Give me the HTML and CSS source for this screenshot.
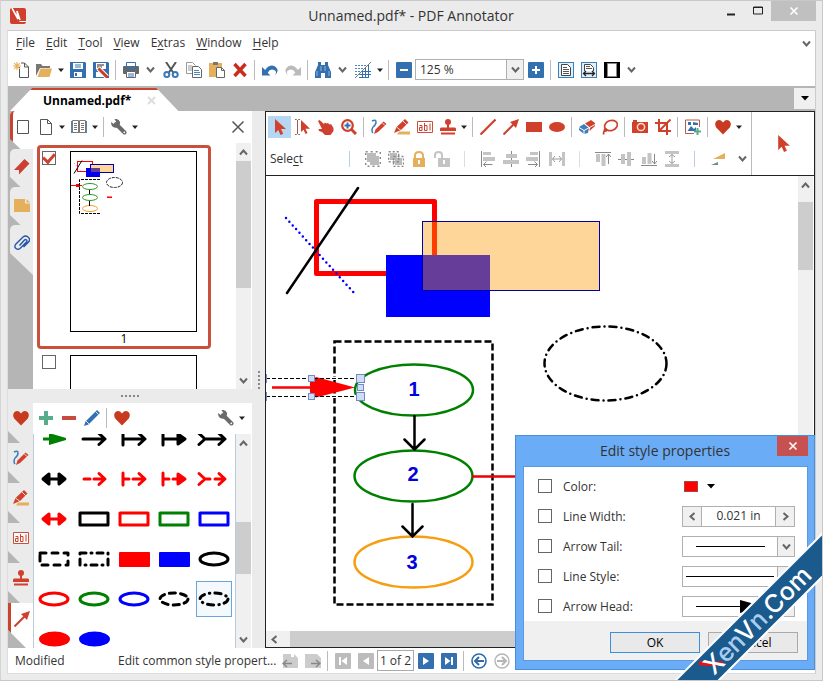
FILE: index.html
```html
<!DOCTYPE html>
<html lang="en">
<head>
<meta charset="utf-8">
<title>Unnamed.pdf* - PDF Annotator</title>
<link rel="stylesheet" href="styles.css">
</head>
<body>
<svg class="defs" aria-hidden="true">
  <symbol id="i-new" viewBox="0 0 16 16"><path d="M6.5 5V15.5h9V5l-4-4H8M11.5 1v4h4" fill="none" stroke="#555"/><path d="M4 0v8M0 4h8M1.2 1.2l5.6 5.6M6.8 1.2L1.200 6.800" stroke="#e9b25d" stroke-width="1.2"/></symbol>
  <symbol id="i-open" viewBox="0 0 16 16"><path d="M0 14V2h5l1.500 2H14v2H4z" fill="#777"/><path d="M4.500 6.500H16L13.500 15H1.500z" fill="#e5b05c"/></symbol>
  <symbol id="i-save" viewBox="0 0 16 16"><path d="M0 0h15l1 1v15H0z" fill="#3470b0"/><path d="M3 1h10v6H3zM4 10h8v5H4z" fill="#fff"/><path d="M5 3h6M5 5h6" stroke="#3470b0"/><path d="M5 11h2v3H5z" fill="#3470b0"/></symbol>
  <symbol id="i-saveas" viewBox="0 0 16 16"><path d="M0 0h15l1 1v15H0z" fill="#3470b0"/><path d="M3 1h10v6H3zM3 10h8v5H3z" fill="#fff"/><path d="M4 3h7M4 5h5" stroke="#222"/><path d="M5 6l9 9" stroke="#fff" stroke-width="5"/><path d="M5.500 6.500l9 9" stroke="#cb3c29" stroke-width="3"/></symbol>
  <symbol id="i-print" viewBox="0 0 16 16"><path d="M3.500 4V.5h9V4" fill="#fff" stroke="#3470b0"/><rect y="4" width="16" height="8" rx="1" fill="#666"/><path d="M2 6h12" stroke="#3470b0" stroke-width="2"/><path d="M3.500 9.500h9v6h-9z" fill="#fff" stroke="#666"/><path d="M5 12h6M5 14h6" stroke="#3470b0"/></symbol>
  <symbol id="i-chev" viewBox="0 0 9 9"><path d="M1 2.500l3.500 4L8 2.500" fill="none" stroke="#666" stroke-width="2"/></symbol>
  <symbol id="i-caret" viewBox="0 0 6 6"><path d="M0 1.500h6L3 5z" fill="#222"/></symbol>
  <symbol id="i-cut" viewBox="0 0 16 16"><path d="M3 0l7.500 11M13 0L5.500 11" stroke="#555" stroke-width="2"/><circle cx="3.800" cy="12.500" r="2.500" fill="none" stroke="#3a78b8" stroke-width="2"/><circle cx="12.200" cy="12.500" r="2.500" fill="none" stroke="#3a78b8" stroke-width="2"/></symbol>
  <symbol id="i-copy" viewBox="0 0 16 16"><path d="M.5.5h6l3 3v8h-9zM2 4h4M2 6h4M2 8h4" fill="#fff" stroke="#999"/><path d="M6.500 4.500h6l3 3v8h-9z" fill="#fff" stroke="#666"/><path d="M8 8.500h5M8 10.500h6M8 12.500h6" stroke="#4a86c0"/></symbol>
  <symbol id="i-paste" viewBox="0 0 16 16"><path d="M0 1h13v14H0z" fill="#e5b05c"/><path d="M4 0h5v3H4z" fill="#777"/><path d="M7.500 5.500h5l3 3v7h-8zM12.500 5.500v3h3" fill="#fff" stroke="#666"/></symbol>
  <symbol id="i-delete" viewBox="0 0 16 16"><path d="M2.500 2l11 12M13.500 2l-11 12" stroke="#cb2c1c" stroke-width="3.400"/></symbol>
  <symbol id="i-undo" viewBox="0 0 16 16"><path d="M0 5v8.500h8.500L5.700 10.700Q8 6.500 12 8t.500 5.500Q17 10.500 15 6.500 12 2 6.500 4.500 4.500 5.500 3.200 8z" fill="#3470b0"/></symbol>
  <symbol id="i-redo" viewBox="0 0 16 16"><path d="M16 5v8.500H7.500l2.800-2.800Q8 6.500 4 8t-.5 5.500Q-1 10.500 1 6.500 4 2 9.500 4.500q2 1 3.300 3.500z" fill="#bbb"/></symbol>
  <symbol id="i-find" viewBox="0 0 16 16"><path d="M3 0h3v3h4V0h3v3l3 7v6h-6v-5H6v5H0v-6l3-7z" fill="#3470b0"/><path d="M2 9v5M6 4v5M10 4v5M14 9v5" stroke="#8fb6dc"/></symbol>
  <symbol id="i-grid" viewBox="0 0 16 16"><path d="M0 3.500h14M0 6.500h11M0 9.500h9M0 12.500h6" stroke="#4a86c0" stroke-dasharray="2 1"/><path d="M16 0L0 16" stroke="#777"/><path d="M7.500 9v7M10.500 6v10M13.500 3v13M5 12.500h11M8 9.500h8M4 15.500h9" stroke="#3470b0"/></symbol>
  <symbol id="i-minus" viewBox="0 0 16 16"><rect width="16" height="16" rx="1" fill="#3470b0"/><path d="M4 8h8" stroke="#fff" stroke-width="2"/></symbol>
  <symbol id="i-plus" viewBox="0 0 16 16"><rect width="16" height="16" rx="1" fill="#3470b0"/><path d="M4 8h8M8 4v8" stroke="#fff" stroke-width="2"/></symbol>
  <symbol id="i-page" viewBox="0 0 16 16"><rect x=".5" y=".5" width="15" height="15" fill="#dff0fb" stroke="#3e7fb8"/><path d="M3.500 2.500h6l3 3v8h-9z" fill="#fff" stroke="#444"/><path d="M5 5.500h4M5 7.500h6M5 9.500h6M5 11.500h6" stroke="#555"/></symbol>
  <symbol id="i-fitw" viewBox="0 0 16 16"><rect x=".5" y=".5" width="15" height="15" fill="#dff0fb" stroke="#3e7fb8"/><path d="M3.500 9V2.500h6l3 3V9" fill="#fff" stroke="#444"/><path d="M5 4.500h4M5 6.500h6" stroke="#555"/><path d="M3 11.500h10M5 9L2.500 11.500 5 14M11 9l2.500 2.500L11 14" fill="none" stroke="#222" stroke-width="1.300"/></symbol>
  <symbol id="i-full" viewBox="0 0 16 16"><path d="M0 0h16v16H0z"/><path d="M3.500 1.500h9v13h-9z" fill="#fff" stroke="#888"/></symbol>
  <symbol id="i-pointer" viewBox="0 0 16 16"><path d="M3 0v14l3.300-3L8.500 16l2.700-1.200L9 10h5z" fill="#d0402c"/></symbol>
  <symbol id="i-textsel" viewBox="0 0 16 16"><path d="M0 .5h1.500l1 1 1-1H5M2.500 1v14M0 15.500h1.500l1-1 1 1H5" fill="none" stroke="#a55a50"/><path d="M6 1v12l2.500-2.300 2 4.300 2-1-2-4.200H15z" fill="#d0402c"/></symbol>
  <symbol id="i-hand" viewBox="0 0 16 16"><path d="M0 2l1.500-1 4.500 4 1-1.500 1.500 1L10 4l1.500 1.500L13 5l2.500 4v3l-3 4H7l-3-3-3-1-.5-2L4 10z" fill="#d0402c"/></symbol>
  <symbol id="i-zoom" viewBox="0 0 16 16"><circle cx="6.500" cy="6.500" r="5.300" fill="#fff" stroke="#d0402c" stroke-width="2.200"/><path d="M10.500 10.500L15 15" stroke="#d0402c" stroke-width="3"/><path d="M6.500 3.500v6M3.500 6.500h6" stroke="#3470b0" stroke-width="2"/></symbol>
  <symbol id="i-pen" viewBox="0 0 16 16"><path d="M1 2q4-2 4 1T2 8q-2 4 0 6" fill="none" stroke="#3f7cbb" stroke-width="1.500"/><path d="M3 15l1.500-4.500 8-8L15.500 5 7 13z" fill="#d0402c"/><path d="M11 3.500l3 3" stroke="#fff" stroke-width=".8"/></symbol>
  <symbol id="i-marker" viewBox="0 0 16 16"><path d="M5 12.500h11v3H3z" fill="#e5b05c"/><path d="M0 14l2.500-6L11 0l3.500 3.500L7 11z" fill="#d0402c"/><path d="M2.500 8L7 11.500M9 2l3.500 3.500" stroke="#fff" stroke-width=".8"/></symbol>
  <symbol id="i-text" viewBox="0 0 16 16"><path d="M.5 2.500h15v11H.5z" fill="#fff" stroke="#c8503f"/><path d="M2.500 6.500h2.500v5H2.500v-3H5M7.500 4v7.500H10v-5H7.500M13 4.500v7" fill="none" stroke="#d0402c"/></symbol>
  <symbol id="i-stamp" viewBox="0 0 16 16"><circle cx="8" cy="3" r="3" fill="#d0402c"/><path d="M7 5h2v3.500h6l1 1V12H0V9.500l1-1h6zM1 13.500h14v2H1z" fill="#d0402c"/></symbol>
  <symbol id="i-line" viewBox="0 0 16 16"><path d="M.5 15.500l15-15" stroke="#d0402c" stroke-width="2.200"/></symbol>
  <symbol id="i-arrow" viewBox="0 0 16 16"><path d="M.5 15.500l11-11" stroke="#c8442f" stroke-width="2"/><path d="M16 0l-3 9-6-6z" fill="#d0402c"/></symbol>
  <symbol id="i-rect" viewBox="0 0 16 16"><path d="M0 3h16v10H0z" fill="#d0402c"/></symbol>
  <symbol id="i-oval" viewBox="0 0 16 16"><ellipse cx="8" cy="8" rx="8" ry="5" fill="#d0402c"/></symbol>
  <symbol id="i-eraser" viewBox="0 0 16 16"><path d="M0 8l5-3 5 4-1 5-4 1-5-4z" fill="#3f7cbb"/><path d="M6 4.500L12 1l4 3v3l-5.500 5L11 8.500z" fill="#d0402c"/><path d="M0 8.500l5 3 11-6M5 11.500V15" fill="none" stroke="#fff"/></symbol>
  <symbol id="i-lasso" viewBox="0 0 16 16"><ellipse cx="9" cy="6.500" rx="6.500" ry="5" transform="rotate(-20 9 6.500)" fill="none" stroke="#d0402c" stroke-width="1.700"/><path d="M3 11q-1.500 1-1.500 4.500" fill="none" stroke="#d0402c" stroke-width="1.800"/><circle cx="3.500" cy="11" r="1.900" fill="#d0402c"/></symbol>
  <symbol id="i-camera" viewBox="0 0 16 16"><path d="M1 1h4v2h11v11H0V3h1z" fill="#d0402c"/><circle cx="9" cy="8" r="3.600" fill="none" stroke="#fde0d0" stroke-width="1.500"/></symbol>
  <symbol id="i-crop" viewBox="0 0 16 16"><path d="M4 0v12h12M0 4h12v12M15.500.5l-11 11" fill="none" stroke="#d0402c" stroke-width="2"/></symbol>
  <symbol id="i-image" viewBox="0 0 16 16"><path d="M9 14.500H.5V1h14v7" fill="#fff" stroke="#b85a4c"/><path d="M2.500 12L6 7l3 3 2-2v4zM3 3h3v3H3zM8 3l5 1v2H8z" fill="#3470b0"/><path d="M12.500 9v7M9 12.500h7" stroke="#55ad8b" stroke-width="2"/></symbol>
  <symbol id="i-heart" viewBox="0 0 16 16"><path d="M8 15.500L1.200 8.500Q-1 4.500 1.500 2 5-.5 8 3.500q3-4 6.500-1.500 2.500 2.500.3 6.500z" fill="#c83a20"/></symbol>
  <symbol id="i-group" viewBox="0 0 16 16"><path d="M2 2h9v3h3v9H5v-3H2z" fill="#bbb"/><path d="M.7.7h14.600v14.600H.7z" fill="none" stroke="#888" stroke-width="1.400" stroke-dasharray="2 3"/></symbol>
  <symbol id="i-ungroup" viewBox="0 0 16 16"><path d="M2 2h7v7H2zM7 7h7v7H7z" fill="#bbb"/><path d="M.7.7h10v10H.7zM5.500 5.500h10v10h-10z" fill="none" stroke="#888" stroke-width="1.400" stroke-dasharray="2 2"/></symbol>
  <symbol id="i-lock" viewBox="0 0 16 16"><path d="M4 8V4.500q0-3.500 4-3.500t4 3.500V8" fill="none" stroke="#e5b05c" stroke-width="2"/><path d="M2 7h12v9H2z" fill="#e5b05c"/><path d="M8 9v4" stroke="#fff" stroke-width="2"/></symbol>
  <symbol id="i-unlock" viewBox="0 0 16 16"><path d="M1 7V4q0-3 3.500-3T8 4v4" fill="none" stroke="#c4c4c4" stroke-width="2"/><path d="M4 7h12v9H4z" fill="#c4c4c4"/><path d="M10 9v4" stroke="#fff" stroke-width="2"/></symbol>
  <symbol id="i-al" viewBox="0 0 16 16"><path d="M1.500 0v16" stroke="#888"/><path d="M3 1h8v3H3zM3 6h12v4H3z" fill="#c4c4c4"/><path d="M3.500 13.500h9M6.500 10.500l-3 3 3 3" fill="none" stroke="#888"/></symbol>
  <symbol id="i-ac" viewBox="0 0 16 16"><path d="M8.500 0v16" stroke="#888"/><path d="M3 3h11v4H3zM0 9h16v4H0z" fill="#c4c4c4"/></symbol>
  <symbol id="i-ar" viewBox="0 0 16 16"><path d="M13.500 0v16" stroke="#888"/><path d="M4 1h8v3H4zM0 6h12v4H0z" fill="#c4c4c4"/><path d="M2 13.500h9M8.500 10.500l3 3-3 3" fill="none" stroke="#888"/></symbol>
  <symbol id="i-aw" viewBox="0 0 16 16"><path d="M0 1h3v14H0zM13 1h3v14h-3z" fill="#c4c4c4"/><path d="M3.500 8h9M6 5L3.500 8 6 11M10 5l2.500 3L10 11" fill="none" stroke="#999"/></symbol>
  <symbol id="i-at" viewBox="0 0 16 16"><path d="M0 1.500h16M13.500 3v10M11 6l2.500-3L16 6" fill="none" stroke="#888"/><path d="M1 3h4v8H1zM6.500 3h4v12h-4z" fill="#c4c4c4"/></symbol>
  <symbol id="i-am" viewBox="0 0 16 16"><path d="M0 8.500h16" stroke="#888"/><path d="M3 3h4v10H3zM9 1h4v14H9z" fill="#c4c4c4"/></symbol>
  <symbol id="i-ab" viewBox="0 0 16 16"><path d="M0 14.500h16M13.500 3v10M11 10l2.500 3 2.500-3" fill="none" stroke="#888"/><path d="M1 6h4v7H1zM6.500 2h4v11h-4z" fill="#c4c4c4"/></symbol>
  <symbol id="i-ah" viewBox="0 0 16 16"><path d="M1 0h14v3H1zM1 13h14v3H1z" fill="#c4c4c4"/><path d="M8 3.500v9M5 6l3-2.500L11 6M5 10l3 2.500 3-2.500" fill="none" stroke="#999"/></symbol>
  <symbol id="i-flip" viewBox="0 0 16 16"><path d="M3 8L15 2v6z" fill="#e5b05c"/><path d="M1 14l7-3v3z" fill="#6e8a8a"/></symbol>
  <symbol id="i-blank" viewBox="0 0 16 16"><path d="M2.500 1.500h11v13h-11z" fill="#fff" stroke="#555"/></symbol>
  <symbol id="i-doc" viewBox="0 0 16 16"><path d="M2.500.5h7l4 4v11h-11zM9.500.5v4h4" fill="#fff" stroke="#555"/></symbol>
  <symbol id="i-book" viewBox="0 0 16 16"><path d="M0 2h16v12H0z" fill="#4c86ba"/><path d="M1.500 1.500h6v12h-6zM8.500 1.500h6v12h-6z" fill="#fff" stroke="#777"/><path d="M3 4.500h3M3 6.500h3M3 8.500h3M3 10.500h3M10 4.500h3M10 6.500h3M10 8.500h3M10 10.500h3" stroke="#777"/></symbol>
  <symbol id="i-wrench" viewBox="0 0 16 16"><path d="M5 5l8.500 8.500" stroke="#6a6a6a" stroke-width="4" stroke-linecap="round"/><path d="M3.500 0Q8-.5 9 3q.5 4-2.500 5.500Q3 9.500 1 7 0 5.500 0 3l3.500 2.500 2-2z" fill="#6a6a6a"/><circle cx="13.300" cy="13.300" r=".9" fill="#fff"/></symbol>
  <symbol id="i-close" viewBox="0 0 16 16"><path d="M2.500 2.500l11 11M13.500 2.500l-11 11" stroke="#555" stroke-width="1.500"/></symbol>
  <symbol id="i-mark" viewBox="0 0 16 16"><path d="M0 11L10.500 0 15.500 4.500 5 15.500 5 11z" fill="#cb4030"/></symbol>
  <symbol id="i-note" viewBox="0 0 16 16"><path d="M0 2h11v4.500h5V15H0zM12.500 2L16 5.500h-3.500z" fill="#e5b05c"/></symbol>
  <symbol id="i-clip" viewBox="0 0 16 16"><path d="M5.500 10.500l5-5.500q1-1 2 0t0 2L6 13.500q-2 1.500-4 0t-.5-4L9 2q2.500-2 5 0t1 4.500L9.500 12" fill="none" stroke="#2657a8" stroke-width="1.400"/></symbol>
  <symbol id="i-add" viewBox="0 0 16 16"><path d="M8 1v14M1 8h14" stroke="#55ad8b" stroke-width="4"/></symbol>
  <symbol id="i-remove" viewBox="0 0 16 16"><path d="M1 8h14" stroke="#c84c3e" stroke-width="4"/></symbol>
  <symbol id="i-pencil" viewBox="0 0 16 16"><path d="M0 16l1.500-4.500L13 0l3 3L4.500 14.500z" fill="#3470b0"/><path d="M2 11l3 3M11.500 1.500l3 3" stroke="#fff" stroke-width=".8"/></symbol>
  <symbol id="i-prevdoc" viewBox="0 0 16 16"><path d="M1 1h8v3h3V1l4 4v10H1z" fill="#ccc"/><path d="M1 10.500h9M5 7l-4 3.500L5 14" fill="none" stroke="#888" stroke-width="1.500"/></symbol>
  <symbol id="i-nextdoc" viewBox="0 0 16 16"><path d="M0 1h12l4 4v10H0z" fill="#ccc"/><path d="M6 10.500h9M11 7l4 3.500-4 3.500" fill="none" stroke="#888" stroke-width="1.500"/></symbol>
  <symbol id="i-first" viewBox="0 0 16 16"><rect width="16" height="16" rx="1" fill="#bcbcbc"/><path d="M4 4h2v8H4zM12 4v8L6.500 8z" fill="#fff"/></symbol>
  <symbol id="i-prev" viewBox="0 0 16 16"><rect width="16" height="16" rx="1" fill="#bcbcbc"/><path d="M11 4v8L5 8z" fill="#fff"/></symbol>
  <symbol id="i-next" viewBox="0 0 16 16"><rect width="16" height="16" rx="1" fill="#3470b0"/><path d="M5 4v8l6-4z" fill="#fff"/></symbol>
  <symbol id="i-last" viewBox="0 0 16 16"><rect width="16" height="16" rx="1" fill="#3470b0"/><path d="M4 4v8l5.500-4zM10 4h2v8h-2z" fill="#fff"/></symbol>
  <symbol id="i-back" viewBox="0 0 16 16"><circle cx="8" cy="8" r="7" fill="#fff" stroke="#2f6cab" stroke-width="1.600"/><path d="M4 8h9M8 4L4 8l4 4" fill="none" stroke="#2f6cab" stroke-width="2"/></symbol>
  <symbol id="i-fwd" viewBox="0 0 16 16"><circle cx="8" cy="8" r="7" fill="#fff" stroke="#b5b5b5" stroke-width="1.400"/><path d="M3 8h9M8 4l4 4-4 4" fill="none" stroke="#b5b5b5" stroke-width="2"/></symbol>
</svg>

<div class="window">
  <header class="titlebar">
    <svg class="logo" viewBox="0 0 16 16"><rect width="16" height="16" rx="2" fill="#cf3f2b"/><path d="M2 0l6 11-1-8 3 9" fill="none" stroke="#fff" stroke-width="1.600"/><path d="M9.500 13.500H16" stroke="#fff"/></svg>
    <h1>Unnamed.pdf* - PDF Annotator</h1>
    <div class="winbtns">
      <button aria-label="Minimize"><svg width="12" height="12"><path d="M2 9.500h8" stroke="#222" stroke-width="2"/></svg></button>
      <button aria-label="Maximize"><svg width="12" height="12"><path d="M1.500 2v7h9V2zM1 2.500h10" fill="none" stroke="#222"/></svg></button>
      <button class="winclose" aria-label="Close"><svg width="12" height="12"><path d="M2.500 2.500l7 7M9.500 2.500l-7 7" stroke="#fff" stroke-width="1.600"/></svg></button>
    </div>
  </header>

  <div class="client">
    <nav class="menu">
      <a href="#"><u>F</u>ile</a><a href="#"><u>E</u>dit</a><a href="#"><u>T</u>ool</a><a href="#"><u>V</u>iew</a><a href="#">E<u>x</u>tras</a><a href="#"><u>W</u>indow</a><a href="#"><u>H</u>elp</a>
      <button class="chev push" aria-label="More menus"><svg><use href="#i-chev"/></svg></button>
    </nav>

    <div class="bar mainbar">
      <button class="ib" aria-label="New"><svg><use href="#i-new"/></svg></button>
      <button class="ib" aria-label="Open"><svg><use href="#i-open"/></svg></button>
      <button class="caret" aria-label="Recent files"><svg><use href="#i-caret"/></svg></button>
      <button class="ib" aria-label="Save"><svg><use href="#i-save"/></svg></button>
      <button class="ib" aria-label="Save as"><svg><use href="#i-saveas"/></svg></button>
      <i class="sep"></i>
      <button class="ib" aria-label="Print"><svg><use href="#i-print"/></svg></button>
      <button class="chev" aria-label="More file tools"><svg><use href="#i-chev"/></svg></button>
      <button class="ib" aria-label="Cut"><svg><use href="#i-cut"/></svg></button>
      <button class="ib" aria-label="Copy"><svg><use href="#i-copy"/></svg></button>
      <button class="ib" aria-label="Paste"><svg><use href="#i-paste"/></svg></button>
      <button class="ib" aria-label="Delete"><svg><use href="#i-delete"/></svg></button>
      <i class="sep"></i>
      <button class="ib" aria-label="Undo"><svg><use href="#i-undo"/></svg></button>
      <button class="ib" aria-label="Redo"><svg><use href="#i-redo"/></svg></button>
      <i class="sep"></i>
      <button class="ib" aria-label="Find"><svg><use href="#i-find"/></svg></button>
      <button class="chev" aria-label="More edit tools"><svg><use href="#i-chev"/></svg></button>
      <button class="ib" aria-label="Grid"><svg><use href="#i-grid"/></svg></button>
      <button class="caret" aria-label="Grid options"><svg><use href="#i-caret"/></svg></button>
      <i class="sep"></i>
      <button class="ib" aria-label="Zoom out"><svg><use href="#i-minus"/></svg></button>
      <div class="combo zoomcombo"><select aria-label="Zoom"><option>125 %</option></select><span class="drop"><svg><use href="#i-chev"/></svg></span></div>
      <button class="ib" aria-label="Zoom in"><svg><use href="#i-plus"/></svg></button>
      <i class="sep"></i>
      <button class="ib" aria-label="Fit page"><svg><use href="#i-page"/></svg></button>
      <button class="ib" aria-label="Fit width"><svg><use href="#i-fitw"/></svg></button>
      <button class="ib" aria-label="Full screen"><svg><use href="#i-full"/></svg></button>
      <button class="chev" aria-label="More view tools"><svg><use href="#i-chev"/></svg></button>
    </div>

    <div class="doctabs">
      <a class="doctab" href="#"><span>Unnamed.pdf*</span><svg width="9" height="9"><path d="M1 1l7 7M8 1L1 8" stroke="#ddd" stroke-width="2"/></svg></a>
      <button class="tablist" aria-label="Document list"><svg width="8" height="5"><path d="M0 0h8L4 4.500z"/></svg></button>
    </div>

    <div class="work">
      <aside class="left">
        <section class="pages">
          <div class="sidetabs">
            <button class="on" aria-label="Pages"></button>
            <button aria-label="Bookmarks"><svg><use href="#i-mark"/></svg></button>
            <button aria-label="Notes"><svg><use href="#i-note"/></svg></button>
            <button aria-label="Attachments"><svg><use href="#i-clip"/></svg></button>
          </div>
          <div class="panel">
            <div class="bar panelbar pagesbar">
              <button class="ib" aria-label="Page size"><svg><use href="#i-blank"/></svg></button>
              <button class="ib" aria-label="Page"><svg><use href="#i-doc"/></svg></button>
              <button class="caret" aria-label="Page options"><svg><use href="#i-caret"/></svg></button>
              <button class="ib" aria-label="Layout"><svg><use href="#i-book"/></svg></button>
              <button class="caret" aria-label="Layout options"><svg><use href="#i-caret"/></svg></button>
              <i class="sep"></i>
              <button class="ib" aria-label="Settings"><svg><use href="#i-wrench"/></svg></button>
              <button class="caret" aria-label="Settings options"><svg><use href="#i-caret"/></svg></button>
              <button class="ib push" aria-label="Close panel"><svg><use href="#i-close"/></svg></button>
            </div>
            <div class="scrollrow">
              <div class="thumbs">
                <div class="thumb on">
                  <input type="checkbox" checked aria-label="Select page 1">
                  <div class="sheet">
                    <svg width="125" height="179" viewBox="71 152 125 179">
                      <g fill="none"><path d="M71 185.500h11" stroke="red"/><path d="M76 184h4v3h-4zM107 196.500h5v1.500h-5z" fill="red"/><rect x="77.500" y="161.500" width="15" height="10" stroke="red"/><path d="M74 173.500l8-13" stroke="#000"/><path d="M74 163l8 9" stroke="#88f" stroke-dasharray="1 2"/><rect x="90.500" y="164.500" width="23" height="8" fill="#ffd699" stroke="#00a"/><rect x="86" y="168" width="14" height="9" fill="#00e"/><rect x="91" y="168" width="9" height="4" fill="#663c96"/>
                      <path d="M100 179.500H79.500v34H100" stroke="#000" stroke-dasharray="3 1"/><ellipse cx="90" cy="186.500" rx="7.500" ry="3" stroke="#2a9a2a"/><ellipse cx="90" cy="197.500" rx="7.500" ry="3" stroke="#2a9a2a"/><ellipse cx="90" cy="208.500" rx="7.500" ry="3" stroke="#f0a020"/><path d="M89.500 190v4M89.500 201v5" stroke="#000"/><ellipse cx="114.500" cy="182.500" rx="8" ry="5" stroke="#222" stroke-dasharray="3 1"/></g>
                    </svg>
                  </div>
                  <span>1</span>
                </div>
                <div class="thumb">
                  <input type="checkbox" aria-label="Select page 2">
                  <div class="sheet"></div>
                </div>
              </div>
              <div class="vscroll"><button aria-label="Scroll up"><svg class="up"><use href="#i-chev"/></svg></button><i class="bar1"></i><button class="push-y" aria-label="Scroll down"><svg><use href="#i-chev"/></svg></button></div>
            </div>
          </div>
        </section>

        <div class="hsplit"></div>

        <section class="favs">
          <div class="tooltabs">
            <button aria-label="Favorites"><svg><use href="#i-heart"/></svg></button>
            <button aria-label="Pen"><svg><use href="#i-pen"/></svg></button>
            <button aria-label="Marker"><svg><use href="#i-marker"/></svg></button>
            <button aria-label="Text"><svg><use href="#i-text"/></svg></button>
            <button aria-label="Stamp"><svg><use href="#i-stamp"/></svg></button>
            <button class="on" aria-label="Arrow"><svg><use href="#i-arrow"/></svg></button>
          </div>
          <div class="panel">
            <div class="bar panelbar">
              <button class="ib" aria-label="Add"><svg><use href="#i-add"/></svg></button>
              <button class="ib" aria-label="Remove"><svg><use href="#i-remove"/></svg></button>
              <button class="ib" aria-label="Edit"><svg><use href="#i-pencil"/></svg></button>
              <i class="sep"></i>
              <button class="ib" aria-label="Favorite"><svg><use href="#i-heart"/></svg></button>
              <button class="ib push" aria-label="Settings"><svg><use href="#i-wrench"/></svg></button>
              <button class="caret" aria-label="Settings options"><svg><use href="#i-caret"/></svg></button>
            </div>
            <div class="scrollrow">
              <div class="styles">
                <div class="stylegrid">
                  <svg viewBox="0 0 40 40"><path d="M9 20h8" stroke="green" stroke-width="3"/><path d="M15 14v12l17-5v-2z" fill="green"/></svg>
                  <svg viewBox="0 0 40 40"><path d="M9 20h21M25 14.500l6 5.500-6 5.500" class="k"/></svg>
                  <svg viewBox="0 0 40 40"><path d="M9 20h21M9 14v12M25 14.500l6 5.500-6 5.500" class="k"/></svg>
                  <svg viewBox="0 0 40 40"><path d="M9 20h18M9 14v12M24 15v10l7-5z" class="k"/><path d="M24 15v10l7-5z"/></svg>
                  <svg viewBox="0 0 40 40"><path d="M10 20h20M5 14.500l6 5.500-6 5.500M25 14.500l6 5.500-6 5.500" class="k"/></svg>

                  <svg viewBox="0 0 40 40"><path d="M12 20h16M15 15v10l-6-5zM25 15v10l6-5z" class="k"/><path d="M15 15v10l-6-5zM25 15v10l6-5z"/></svg>
                  <svg viewBox="0 0 40 40"><path d="M10 20h6M20 20h10M25 14.500l6 5.500-6 5.500" class="k r"/></svg>
                  <svg viewBox="0 0 40 40"><path d="M9 20h6M19 20h11M9 14v12M25 14.500l6 5.500-6 5.500" class="k r"/></svg>
                  <svg viewBox="0 0 40 40"><path d="M9 20h6M19 20h8M9 14v12" class="k r"/><path d="M24 15v10l7-5z" class="k r solid"/></svg>
                  <svg viewBox="0 0 40 40"><path d="M10 20h6M21 20h9M5 14.500l6 5.500-6 5.500M25 14.500l6 5.500-6 5.500" class="k r"/></svg>

                  <svg viewBox="0 0 40 40"><path d="M12 20h16" class="k r"/><path d="M15 15v10l-6-5zM25 15v10l6-5z" class="k r solid"/></svg>
                  <svg viewBox="0 0 40 40"><rect x="6" y="14" width="28" height="12" class="k"/></svg>
                  <svg viewBox="0 0 40 40"><rect x="6" y="14" width="28" height="12" class="k r"/></svg>
                  <svg viewBox="0 0 40 40"><rect x="6" y="14" width="28" height="12" class="k g"/></svg>
                  <svg viewBox="0 0 40 40"><rect x="6" y="14" width="28" height="12" class="k b"/></svg>

                  <svg viewBox="0 0 40 40"><rect x="6" y="14" width="28" height="12" class="k" stroke-dasharray="6 6"/></svg>
                  <svg viewBox="0 0 40 40"><rect x="6" y="14" width="28" height="12" class="k" stroke-dasharray="6 5 1 5"/></svg>
                  <svg viewBox="0 0 40 40"><rect x="5" y="13" width="31" height="15" rx="1" fill="red"/></svg>
                  <svg viewBox="0 0 40 40"><rect x="5" y="13" width="31" height="15" rx="1" fill="blue"/></svg>
                  <svg viewBox="0 0 40 40"><ellipse cx="20" cy="20" rx="14" ry="6" class="k"/></svg>

                  <svg viewBox="0 0 40 40"><ellipse cx="20" cy="20" rx="14" ry="6" class="k r"/></svg>
                  <svg viewBox="0 0 40 40"><ellipse cx="20" cy="20" rx="14" ry="6" class="k g"/></svg>
                  <svg viewBox="0 0 40 40"><ellipse cx="20" cy="20" rx="14" ry="6" class="k b"/></svg>
                  <svg viewBox="0 0 40 40"><ellipse cx="20" cy="20" rx="14" ry="6" class="k" stroke-dasharray="6 5"/></svg>
                  <svg viewBox="0 0 40 40"><rect x="2.500" y="2.500" width="35" height="35" fill="#f4f9fd" stroke="#6aa5dc"/><ellipse cx="20" cy="20" rx="14" ry="6" class="k" stroke-dasharray="6 5 .5 5"/></svg>

                  <svg viewBox="0 0 40 40"><ellipse cx="20.500" cy="20" rx="15.500" ry="7.500" fill="red"/></svg>
                  <svg viewBox="0 0 40 40"><ellipse cx="20.500" cy="20" rx="15.500" ry="7.500" fill="blue"/></svg>
                </div>
              </div>
              <div class="vscroll"><button aria-label="Scroll up"><svg class="up"><use href="#i-chev"/></svg></button><i class="bar2"></i><button class="push-y" aria-label="Scroll down"><svg><use href="#i-chev"/></svg></button></div>
            </div>
          </div>
        </section>
      </aside>

      <div class="vsplit"></div>

      <main class="doc">
        <div class="toolbox">
          <div class="toolrows">
            <div class="bar">
              <button class="ib sel" aria-label="Select"><svg><use href="#i-pointer"/></svg></button>
              <button class="ib" aria-label="Select text"><svg><use href="#i-textsel"/></svg></button>
              <button class="ib" aria-label="Pan"><svg><use href="#i-hand"/></svg></button>
              <button class="ib" aria-label="Zoom"><svg><use href="#i-zoom"/></svg></button>
              <i class="sep"></i>
              <button class="ib" aria-label="Pen"><svg><use href="#i-pen"/></svg></button>
              <button class="ib" aria-label="Marker"><svg><use href="#i-marker"/></svg></button>
              <button class="ib" aria-label="Text"><svg><use href="#i-text"/></svg></button>
              <button class="ib" aria-label="Stamp"><svg><use href="#i-stamp"/></svg></button>
              <button class="caret" aria-label="Stamp options"><svg><use href="#i-caret"/></svg></button>
              <i class="sep"></i>
              <button class="ib" aria-label="Line"><svg><use href="#i-line"/></svg></button>
              <button class="ib" aria-label="Arrow"><svg><use href="#i-arrow"/></svg></button>
              <button class="ib" aria-label="Rectangle"><svg><use href="#i-rect"/></svg></button>
              <button class="ib" aria-label="Ellipse"><svg><use href="#i-oval"/></svg></button>
              <i class="sep"></i>
              <button class="ib" aria-label="Eraser"><svg><use href="#i-eraser"/></svg></button>
              <button class="ib" aria-label="Lasso"><svg><use href="#i-lasso"/></svg></button>
              <i class="sep"></i>
              <button class="ib" aria-label="Snapshot"><svg><use href="#i-camera"/></svg></button>
              <button class="ib" aria-label="Crop"><svg><use href="#i-crop"/></svg></button>
              <i class="sep"></i>
              <button class="ib" aria-label="Insert image"><svg><use href="#i-image"/></svg></button>
              <i class="sep"></i>
              <button class="ib" aria-label="Favorites"><svg><use href="#i-heart"/></svg></button>
              <button class="caret" aria-label="Favorites options"><svg><use href="#i-caret"/></svg></button>
            </div>
            <div class="bar selbar">
              <span class="toolname">Sele<u>c</u>t</span>
              <i class="sep blue"></i>
              <button class="ib" aria-label="Group"><svg><use href="#i-group"/></svg></button>
              <button class="ib" aria-label="Ungroup"><svg><use href="#i-ungroup"/></svg></button>
              <button class="ib" aria-label="Lock"><svg><use href="#i-lock"/></svg></button>
              <button class="ib" aria-label="Unlock"><svg><use href="#i-unlock"/></svg></button>
              <i class="sep"></i>
              <button class="ib" aria-label="Align left"><svg><use href="#i-al"/></svg></button>
              <button class="ib" aria-label="Align center"><svg><use href="#i-ac"/></svg></button>
              <button class="ib" aria-label="Align right"><svg><use href="#i-ar"/></svg></button>
              <button class="ib" aria-label="Same width"><svg><use href="#i-aw"/></svg></button>
              <i class="sep"></i>
              <button class="ib" aria-label="Align top"><svg><use href="#i-at"/></svg></button>
              <button class="ib" aria-label="Align middle"><svg><use href="#i-am"/></svg></button>
              <button class="ib" aria-label="Align bottom"><svg><use href="#i-ab"/></svg></button>
              <button class="ib" aria-label="Same height"><svg><use href="#i-ah"/></svg></button>
              <i class="sep blue"></i>
              <button class="ib" aria-label="Rotate"><svg><use href="#i-flip"/></svg></button>
              <button class="chev push" aria-label="More tools"><svg><use href="#i-chev"/></svg></button>
            </div>
          </div>
          <div class="curtool"><svg><use href="#i-pointer"/></svg></div>
        </div>
        <div class="view">
          <div class="canvas">
            <svg width="532" height="455" viewBox="266 176 532 455">
              <rect x="316.500" y="201.500" width="118" height="72" fill="none" stroke="red" stroke-width="5" stroke-linejoin="round"/>
              <rect x="386" y="255" width="104" height="62" fill="blue"/>
              <path d="M286 218l69 76" stroke="blue" stroke-width="2.500" stroke-linecap="round" stroke-dasharray="0 5"/>
              <path d="M287 293l71-105" stroke="#000" stroke-width="2.500" stroke-linecap="round"/>
              <rect x="422.500" y="221.500" width="177" height="69" fill="#ff9900" fill-opacity=".4" stroke="#00a"/>
              <rect x="334.500" y="341.500" width="158" height="263" fill="none" stroke="#000" stroke-width="2.500" stroke-dasharray="7 3" stroke-linecap="butt"/>
              <ellipse cx="605.500" cy="363.500" rx="61" ry="37" fill="none" stroke="#000" stroke-width="2.500" stroke-linecap="round" stroke-dasharray="7 5 0 5"/>
              <g fill="none" stroke="green" stroke-width="2.500"><ellipse cx="414" cy="390" rx="59" ry="25.500"/><ellipse cx="413.500" cy="476" rx="59" ry="25.500"/><ellipse cx="413.500" cy="562" rx="59" ry="25.500" stroke="#f79e10"/></g>
              <path d="M414.500 416v32M404.500 439.500l10 10 10-10M412.500 504v32M402.500 526.500l10 10 10-10" fill="none" stroke="#000" stroke-width="2.500" stroke-linecap="round"/>
              <path d="M472 476.500h60" stroke="#e00" stroke-width="2.500"/>
              <path d="M266 378.500h95M266 396.500h95" stroke="#fff" stroke-width="3"/>
              <path d="M272 387.500h42" stroke="red" stroke-width="2.500"/><path d="M310 382l6-5 39 10.500-39 10-6-5z" fill="red"/>
              <path d="M266 378.500h95M266 396.500h95" stroke="#000" stroke-dasharray="4 2"/>
              <g fill="#cfdcf6" stroke="#7389c4"><rect x="308.500" y="375.500" width="6" height="6"/><rect x="308.500" y="393.500" width="6" height="6"/><rect x="357.500" y="384.500" width="6" height="6"/><rect x="356.500" y="374.500" width="8" height="8"/><rect x="356.500" y="392.500" width="8" height="8"/><rect x="258.500" y="374.500" width="8" height="8"/><rect x="258.500" y="392.500" width="8" height="8"/></g>
              <g class="nums"><text x="414" y="396">1</text><text x="413" y="481">2</text><text x="412" y="569">3</text></g>
            </svg>
          </div>
          <div class="vscroll"><button aria-label="Scroll up"><svg class="up"><use href="#i-chev"/></svg></button><i class="bar3"></i></div>
        </div>
        <div class="hscroll"><button aria-label="Scroll left"><svg class="lt"><use href="#i-chev"/></svg></button><i></i></div>
      </main>
    </div>

    <footer class="bar status">
      <span class="state">Modified</span>
      <span class="hint">Edit common style propert...</span>
      <button class="ib" aria-label="Previous document"><svg><use href="#i-prevdoc"/></svg></button>
      <button class="ib" aria-label="Next document"><svg><use href="#i-nextdoc"/></svg></button>
      <i class="sep"></i>
      <button class="ib" aria-label="First page"><svg><use href="#i-first"/></svg></button>
      <button class="ib" aria-label="Previous page"><svg><use href="#i-prev"/></svg></button>
      <input type="text" value="1 of 2" aria-label="Page">
      <button class="ib" aria-label="Next page"><svg><use href="#i-next"/></svg></button>
      <button class="ib" aria-label="Last page"><svg><use href="#i-last"/></svg></button>
      <i class="sep"></i>
      <button class="ib" aria-label="Back"><svg><use href="#i-back"/></svg></button>
      <button class="ib" aria-label="Forward"><svg><use href="#i-fwd"/></svg></button>
    </footer>
  </div>

  <form class="dialog" role="dialog" aria-labelledby="dlg-title">
    <div class="dlghead"><h2 id="dlg-title">Edit style properties</h2><button type="button" aria-label="Close dialog"><svg width="10" height="10"><path d="M1.500 1.500l7 7M8.500 1.500l-7 7" stroke="#fff" stroke-width="1.600"/></svg></button></div>
    <div class="dlgbody">
      <div class="props">
        <div class="prop"><input type="checkbox" id="p1"><label for="p1">Color:</label><button type="button" class="color" aria-label="Pick color"><i></i><svg width="8" height="5"><path d="M0 0h8L4 4.500z"/></svg></button></div>
        <div class="prop"><input type="checkbox" id="p2"><label for="p2">Line Width:</label><div class="spin"><button type="button" aria-label="Decrease"><svg class="lt"><use href="#i-chev"/></svg></button><input type="text" value="0.021 in" aria-label="Line width"><button type="button" aria-label="Increase"><svg class="rt"><use href="#i-chev"/></svg></button></div></div>
        <div class="prop"><input type="checkbox" id="p3"><label for="p3">Arrow Tail:</label><div class="combo"><select aria-label="Arrow tail"><option></option></select><svg class="sample" viewBox="0 0 94 18"><path d="M13 9.500h69" stroke="#000"/></svg><span class="drop"><svg><use href="#i-chev"/></svg></span></div></div>
        <div class="prop"><input type="checkbox" id="p4"><label for="p4">Line Style:</label><div class="combo"><select aria-label="Line style"><option></option></select><svg class="sample" viewBox="0 0 94 18"><path d="M3 9.500h88" stroke="#000"/></svg><span class="drop"><svg><use href="#i-chev"/></svg></span></div></div>
        <div class="prop"><input type="checkbox" id="p5"><label for="p5">Arrow Head:</label><div class="combo"><select aria-label="Arrow head"><option></option></select><svg class="sample" viewBox="0 0 94 18"><path d="M13 9.500h46" stroke="#000"/><path d="M57 3v13l24-6.500z"/></svg><span class="drop"><svg><use href="#i-chev"/></svg></span></div></div>
      </div>
      <div class="dlgfoot"><button type="button" class="default">OK</button><button type="button">Cancel</button></div>
    </div>
  </form>

  <svg class="ribbon" width="150" height="150" viewBox="0 0 150 150">
    <path d="M153 -1L-2 154h43l112-112z" fill="#1b5a8c" stroke="#fff" stroke-width="2"/>
    <path d="M26 132q12 2 24 0" stroke="#e11" stroke-width="4" fill="none"/>
    <g transform="translate(41 145) rotate(-45)"><text>X<tspan class="pale">en</tspan>V<tspan class="pale">n</tspan>.Com</text></g>
  </svg>
</div>
</body>
</html>
```
FILE: styles.css
```css
* { box-sizing: border-box; }
body {
  margin: 0;
  background: #ebebeb;
  font: 12px/16px "Open Sans", "Noto Sans", sans-serif;
  color: #333;
}
h1, h2 { margin: 0; font-weight: 400; color: #333; }
a { color: inherit; text-decoration: none; }
u { text-underline-offset: 2px; }
button {
  display: flex; align-items: center; justify-content: center;
  padding: 0; border: 0; background: none; font: inherit; color: inherit; flex: none;
}
input, select { margin: 0; font: inherit; color: inherit; }
svg { display: block; flex: none; }
.defs { width: 0; height: 0; position: absolute; }
.push { margin-left: auto; }
.push-y { margin-top: auto; }

.window {
  position: relative;
  display: flex; flex-direction: column;
  height: 100vh; padding: 0 7px 6px;
  border: 1px solid #c8c8c8; border-left-color: #d4d4d4;
  overflow: hidden;
}
.titlebar { display: grid; grid-template-columns: 1fr auto 1fr; align-items: center; height: 29px; margin-right: -1px; }
.logo { width: 16px; height: 16px; margin-left: 2px; }
.titlebar h1 { font-size: 14px; line-height: 20px; padding-right: 2px; }
.winbtns { display: flex; justify-content: flex-end; align-self: start; }
.winbtns button { width: 27px; height: 20px; }
.winbtns .winclose { width: 45px; background: #c0c0c0; }
.client { flex: 1; min-height: 0; display: flex; flex-direction: column; border: 1px solid #ccc; border-left-color: #ddd; border-bottom-color: #ddd; background: #fff; margin: 0 -1px; }

.menu { display: flex; align-items: center; gap: 11px; height: 24px; padding-left: 8px; }
.bar { display: flex; align-items: center; }
.mainbar { height: 31px; padding: 0 0 2px 1px; }
.ib { width: 23px; height: 22px; }
.ib svg { width: 16px; height: 16px; }
.caret { width: 10px; height: 22px; }
.caret svg { width: 6px; height: 6px; }
.mainbar .caret { width: 11px; }
.chev { width: 17px; height: 22px; }
.chev svg, .drop svg { width: 9px; height: 9px; }
.sep { flex: none; width: 1px; height: 20px; margin: 0 3px; background: #bbb; }

.combo { position: relative; display: flex; width: 113px; height: 21px; border: 1px solid #b0b0b0; background: #fff; }
.combo select { flex: 1; min-width: 0; appearance: none; border: 0; padding: 0 4px; background: none; line-height: 16px; }
.drop { display: flex; align-items: center; justify-content: center; width: 17px; border-left: 1px solid #b0b0b0; background: #f0f0f0; }
.zoomcombo { width: 109px; }
.sample { position: absolute; left: 0; top: 0; width: 94px; height: 18px; }

.doctabs { display: flex; justify-content: space-between; align-items: flex-end; height: 25px; background: #b5b5b5; }
.doctab {
  display: flex; align-items: center; gap: 16px;
  height: 23px; padding: 0 22px 0 33px; margin-left: 2px;
  border-top: 2px solid #c8442f; background: #fff;
  clip-path: polygon(0 100%, 22px 0, calc(100% - 22px) 0, 100% 100%);
  font-weight: 700; color: #000;
}
.tablist { width: 21px; height: 21px; background: #f0f0f0; margin-bottom: 2px; }

.work { flex: 1; min-height: 0; display: flex; }
.left { display: flex; flex-direction: column; width: 244px; min-height: 0; }
.pages { display: flex; height: 278px; background: #b5b5b5; }
.sidetabs { width: 25px; padding-left: 2px; display: flex; flex-direction: column; }
.sidetabs button { height: 50px; margin-bottom: -12px; padding-bottom: 14px; background: #ebebeb; border-top-left-radius: 5px; clip-path: polygon(0 0, 100% 0, 100% 100%, 0 28px); }
.sidetabs .on { background: #fff; border-left: 3px solid #c8442f; }
.sidetabs svg, .tooltabs svg { width: 16px; height: 16px; }
.panel { flex: 1; min-width: 0; display: flex; flex-direction: column; background: #fff; }
.panelbar { height: 31px; padding: 0 3px 2px 1px; flex: none; }
.pagesbar { position: relative; z-index: 1; height: 32px; margin-left: -23px; padding-bottom: 0; }
.scrollrow { flex: 1; min-height: 0; display: flex; }
.thumbs { flex: 1; overflow: hidden; padding: 2px 0 0 4px; }
.thumb { display: grid; grid-template-columns: 28px 127px; justify-items: start; width: 174px; padding: 3px 2px 0; border: 3px solid transparent; border-radius: 4px; }
.thumb.on { border-color: #c8503c; }
.sheet { width: 127px; height: 181px; border: 1px solid #000; background: #fff; }
.thumb span { grid-column: 2; width: 108px; line-height: 14px; text-align: center; color: #000; }
input[type="checkbox"] { appearance: none; width: 14px; height: 14px; border: 1px solid #666; background: #fff; display: grid; place-items: center; }
input[type="checkbox"]:checked::after { content: ""; width: 9px; height: 5px; border: solid #d0402c; border-width: 0 0 3px 3px; transform: rotate(-48deg); margin-bottom: 3px; }

.vscroll { display: flex; flex-direction: column; width: 16px; background: #f0f0f0; border-right: 1px solid #fff; }
.vscroll button { height: 18px; }
.vscroll svg, .hscroll svg, .spin svg { width: 9px; height: 9px; }
.up { transform: rotate(180deg); }
.lt { transform: rotate(90deg); }
.rt { transform: rotate(-90deg); }
.vscroll i, .hscroll i { background: #cdcdcd; }
.bar1 { height: 127px; }
.bar2 { height: 52px; margin-top: 70px; }
.bar3 { height: 68px; margin-top: 8px; }

.hsplit { height: 14px; background: #ebebeb; display: flex; justify-content: center; align-items: center; }
.hsplit::after { content: ""; width: 19px; height: 2px; background: repeating-linear-gradient(90deg, #888 0 2px, transparent 2px 4px); }
.vsplit { width: 13px; background: #ebebeb; display: flex; justify-content: center; align-items: center; }
.vsplit::after { content: ""; width: 2px; height: 18px; background: repeating-linear-gradient(#888 0 2px, transparent 2px 4px); }

.favs { flex: 1; min-height: 0; display: flex; }
.tooltabs { width: 25px; background: #b5b5b5; display: flex; flex-direction: column; }
.tooltabs button { height: 40px; padding-bottom: 10px; background: #ebebeb; clip-path: polygon(0 0, 100% 0, 100% 100%, 12px 100%, 0 calc(100% - 12px)); }
.tooltabs .on { flex: 1; padding-bottom: 14px; background: #fff; border-left: 3px solid #c8442f; clip-path: polygon(0 0, 100% 0, 100% 100%, 18px 100%, 0 calc(100% - 18px)); }
.favs .caret { margin-right: 2px; }
.styles { flex: 1; overflow: hidden; border: solid #b9cbdc; border-width: 0 1px; }
.stylegrid { display: grid; grid-template-columns: repeat(5, 40px); margin: -15px 0 0; }
.stylegrid svg { width: 40px; height: 40px; }
.k { fill: none; stroke: #000; stroke-width: 3px; stroke-linecap: round; stroke-linejoin: round; }
.r { stroke: red; }
.g { stroke: green; }
.b { stroke: blue; }
.solid { fill: red; }

.doc { flex: 1; min-width: 0; display: flex; flex-direction: column; border: 1px solid #222; }
.toolbox { display: flex; height: 64px; border-bottom: 1px solid #222; }
.toolrows { flex: 1; padding: 3px 0 0 2px; }
.toolrows .bar { height: 23px; }
.toolrows .selbar { margin-top: 9px; }
.selbar .sep { margin: 0 11px; height: 16px; background: #ddd; }
.selbar .blue { background: #b9cfe4; }
.toolname { width: 70px; padding-left: 2px; }
.sel { background: #b5d7f3; }
.curtool { display: flex; align-items: center; justify-content: center; width: 63px; border-left: 1px solid #bbb; }
.curtool svg { width: 17px; height: 17px; }
.view { flex: 1; min-height: 0; display: flex; }
.canvas { flex: 1; min-width: 0; overflow: hidden; }
.nums { font: 700 20px "Liberation Sans", sans-serif; fill: #0000e0; text-anchor: middle; }
.hscroll { display: flex; height: 16px; background: #f0f0f0; }
.hscroll button { width: 24px; padding-right: 8px; }
.hscroll i { width: 75%; }

.status { height: 25px; padding-left: 7px; }
.state { width: 103px; }
.hint { width: 160px; white-space: nowrap; }
.status input { width: 37px; height: 21px; padding: 0; border: 1px solid #aaa; text-align: center; }

.dialog { position: absolute; right: 7px; bottom: 10px; width: 300px; padding: 0 6px 8px 7px; background: #6bacf6; border: 1px solid #4a8fdc; }
.dlghead { display: flex; align-items: center; height: 30px; }
.dlghead h2 { flex: 1; padding-left: 30px; text-align: center; font-size: 14px; line-height: 20px; }
.dlghead button { align-self: start; width: 31px; height: 20px; background: #c75050; }
.dlgbody { background: #fff; border: 1px solid #5a98e0; }
.props { padding: 4px 11px 0 14px; }
.prop { display: grid; grid-template-columns: 25px 119px 113px; align-items: center; height: 30px; }
.prop label { padding-top: 2px; }
.color { justify-self: start; gap: 9px; padding-left: 2px; }
.color i { width: 14px; height: 11px; background: red; border: 1px solid #a44; }
.spin { display: flex; height: 21px; border: 1px solid #b0b0b0; }
.spin button { width: 18px; background: #f0f0f0; }
.spin input { flex: 1; min-width: 0; border: solid #b0b0b0; border-width: 0 1px; text-align: center; padding: 0; }
.dlgfoot { display: flex; justify-content: flex-end; gap: 8px; padding: 11px 9px 7px 0; background: #f0f0f0; }
.dlgfoot button { width: 90px; height: 21px; border: 1px solid #aaa; background: #e9e9e9; color: #000; }
.dlgfoot .default { border-color: #3c8fde; }

.ribbon { position: absolute; right: -1px; bottom: -1px; }
.ribbon text { font: 500 25px Inter, sans-serif; fill: #fff; }
.ribbon .pale { fill: #a9cdee; }
```
